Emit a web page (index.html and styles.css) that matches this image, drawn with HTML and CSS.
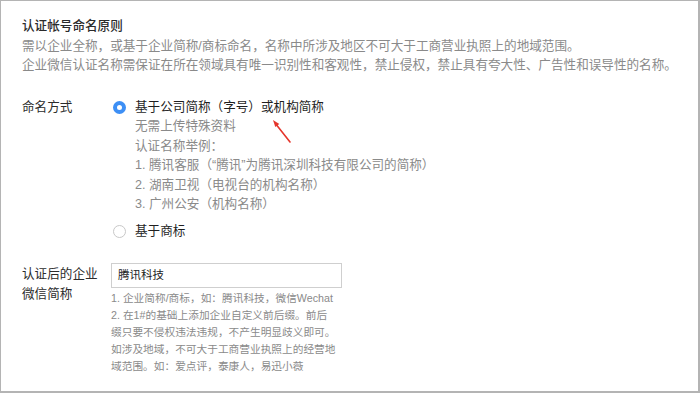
FILE: index.html
```html
<!DOCTYPE html>
<html lang="zh-CN">
<head>
<meta charset="utf-8">
<title>认证帐号命名原则</title>
<link rel="stylesheet" href="styles.css">
</head>
<body>
<div class="frame">
  <section class="rules">
    <h1 class="title">认证帐号命名原则</h1>
    <p class="desc">需以企业全称，或基于企业简称/商标命名，名称中所涉及地区不可大于工商营业执照上的地域范围。</p>
    <p class="desc">企业微信认证名称需保证在所在领域具有唯一识别性和客观性，禁止侵权，禁止具有夸大性、广告性和误导性的名称。</p>
  </section>

  <div class="row naming">
    <div class="label">命名方式</div>
    <div class="options">
      <div class="option">
        <span class="radio checked"></span>
        <div class="opt-body">
          <div class="opt-title">基于公司简称（字号）或机构简称</div>
          <div class="opt-note">无需上传特殊资料</div>
          <div class="opt-note">认证名称举例：</div>
          <div class="opt-note">1. 腾讯客服（“腾讯”为腾讯深圳科技有限公司的简称）</div>
          <div class="opt-note">2. 湖南卫视（电视台的机构名称）</div>
          <div class="opt-note">3. 广州公安（机构名称）</div>
        </div>
      </div>
      <div class="option second">
        <span class="radio"></span>
        <div class="opt-body">
          <div class="opt-title">基于商标</div>
        </div>
      </div>
    </div>
  </div>

  <div class="row shortname">
    <div class="label label-two">认证后的企业<br>微信简称</div>
    <div class="field">
      <div class="input">腾讯科技</div>
      <div class="help">
        <div>1. 企业简称/商标，如：腾讯科技，微信Wechat</div>
        <div>2. 在1#的基础上添加企业自定义前后缀。前后<br>缀只要不侵权违法违规，不产生明显歧义即可。<br>如涉及地域，不可大于工商营业执照上的经营地<br>域范围。如：爱点评，泰康人，易迅小薇</div>
      </div>
    </div>
  </div>

  <svg class="arrow" width="30" height="34" viewBox="0 0 30 34" aria-hidden="true">
    <line x1="25" y1="29" x2="11" y2="11.3" stroke="#e5352b" stroke-width="1.6" stroke-linecap="round"/>
    <polygon points="8,7 14.3,11 10.3,14.1" fill="#e5352b"/>
  </svg>
</div>
</body>
</html>
```

FILE: styles.css
```css
html, body {
  margin: 0;
  padding: 0;
  background: #fff;
}

body {
  font-family: "Liberation Sans", "Noto Sans CJK SC", sans-serif;
  color: #333;
}

.frame {
  position: relative;
  box-sizing: border-box;
  width: 700px;
  height: 393px;
  border: 1px solid #b4b4b4;
  border-right-width: 2px;
  border-bottom-width: 2px;
  padding: 16px 0 0 21px;
  overflow: hidden;
}

.rules .title {
  margin: 0;
  font-size: 12.6px;
  font-weight: 500;
  line-height: 19.5px;
  color: #2b2b2b;
}

.rules .desc {
  margin: 0;
  font-size: 12.6px;
  line-height: 19.5px;
  color: #8a8a8a;
  white-space: nowrap;
}

.row {
  display: flex;
  align-items: flex-start;
}

.label {
  width: 91px;
  flex: none;
  font-size: 12.6px;
  line-height: 19.6px;
  color: #2b2b2b;
}

.naming {
  margin-top: 22px;
}

.options {
  display: flex;
  flex-direction: column;
}

.option {
  display: flex;
  align-items: flex-start;
}

.option.second {
  margin-top: 6.5px;
}

.radio {
  box-sizing: border-box;
  width: 13px;
  height: 13px;
  margin-top: 3.3px;
  margin-right: 9px;
  border-radius: 50%;
  border: 1px solid #c8c8c8;
  background: #fff;
  flex: none;
}

.radio.checked {
  border: 4px solid #3d8ff5;
  background: #fff;
}

.opt-title {
  font-size: 12.6px;
  line-height: 19.6px;
  color: #1f1f1f;
}

.opt-note {
  font-size: 12.6px;
  line-height: 19.6px;
  color: #8a8a8a;
  white-space: nowrap;
}

.shortname {
  margin-top: 22px;
}

.label-two {
  width: 89px;
  line-height: 20px;
  margin-top: 1px;
}

.field {
  display: flex;
  flex-direction: column;
}

.input {
  box-sizing: border-box;
  width: 231px;
  height: 25px;
  border: 1px solid #cfcfcf;
  padding-left: 6px;
  font-size: 11.5px;
  line-height: 23px;
  color: #222;
}

.help {
  margin-top: 1.5px;
  font-size: 10.7px;
  line-height: 17px;
  color: #8a8a8a;
  white-space: nowrap;
}

.arrow {
  position: absolute;
  left: 264px;
  top: 112px;
}
```
